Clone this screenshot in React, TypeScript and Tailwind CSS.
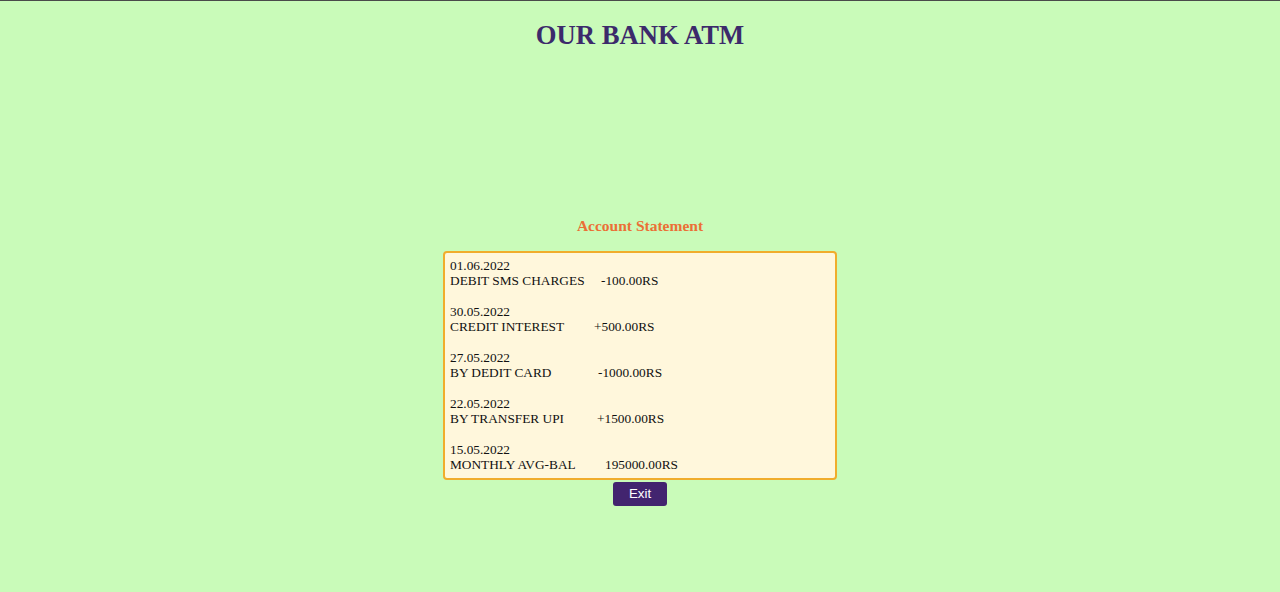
const entries = [
  { date: "01.06.2022", label: "DEBIT SMS CHARGES", amount: "-100.00RS", w: "w-[151px]" },
  { date: "30.05.2022", label: "CREDIT INTEREST", amount: "+500.00RS", w: "w-[144px]" },
  { date: "27.05.2022", label: "BY DEDIT CARD", amount: "-1000.00RS", w: "w-[148px]" },
  { date: "22.05.2022", label: "BY TRANSFER UPI", amount: "+1500.00RS", w: "w-[147px]" },
  { date: "15.05.2022", label: "MONTHLY AVG-BAL", amount: "195000.00RS", w: "w-[155px]" },
];

const App = () => {
  return (
    <div className="w-full h-[592px] bg-[#c9fbb9] border-t border-[#4a4a4a] flex flex-col items-center font-['Liberation_Serif',serif]">
      <h1 className="mt-[19px] text-[26.67px] leading-[31px] font-bold text-[#3c2a6b]">OUR BANK ATM</h1>

      <h2 className="mt-[166px] text-[15.5px] leading-[18px] font-bold text-[#eb6f36]">Account Statement</h2>

      <div className="mt-[16px] w-[394px] h-[229px] bg-[#fff7dc] border-2 border-[#f0ad2c] rounded-[4px] pt-[5px] px-[5px] text-[13.33px] leading-[15.33px] text-[#111]">
        {entries.map((e, i) => (
          <div key={i}>
            {i > 0 && <div className="h-[15.33px]" />}
            <div>{e.date}</div>
            <div className="whitespace-nowrap">
              <span className={`inline-block ${e.w}`}>{e.label}</span>
              {e.amount}
            </div>
          </div>
        ))}
      </div>

      <button className="mt-[2px] w-[54px] h-[24px] rounded-[3px] bg-[#42246f] text-white text-[13.33px] font-['Liberation_Sans',Arial,sans-serif]">
        Exit
      </button>
    </div>
  );
};

export default App;
